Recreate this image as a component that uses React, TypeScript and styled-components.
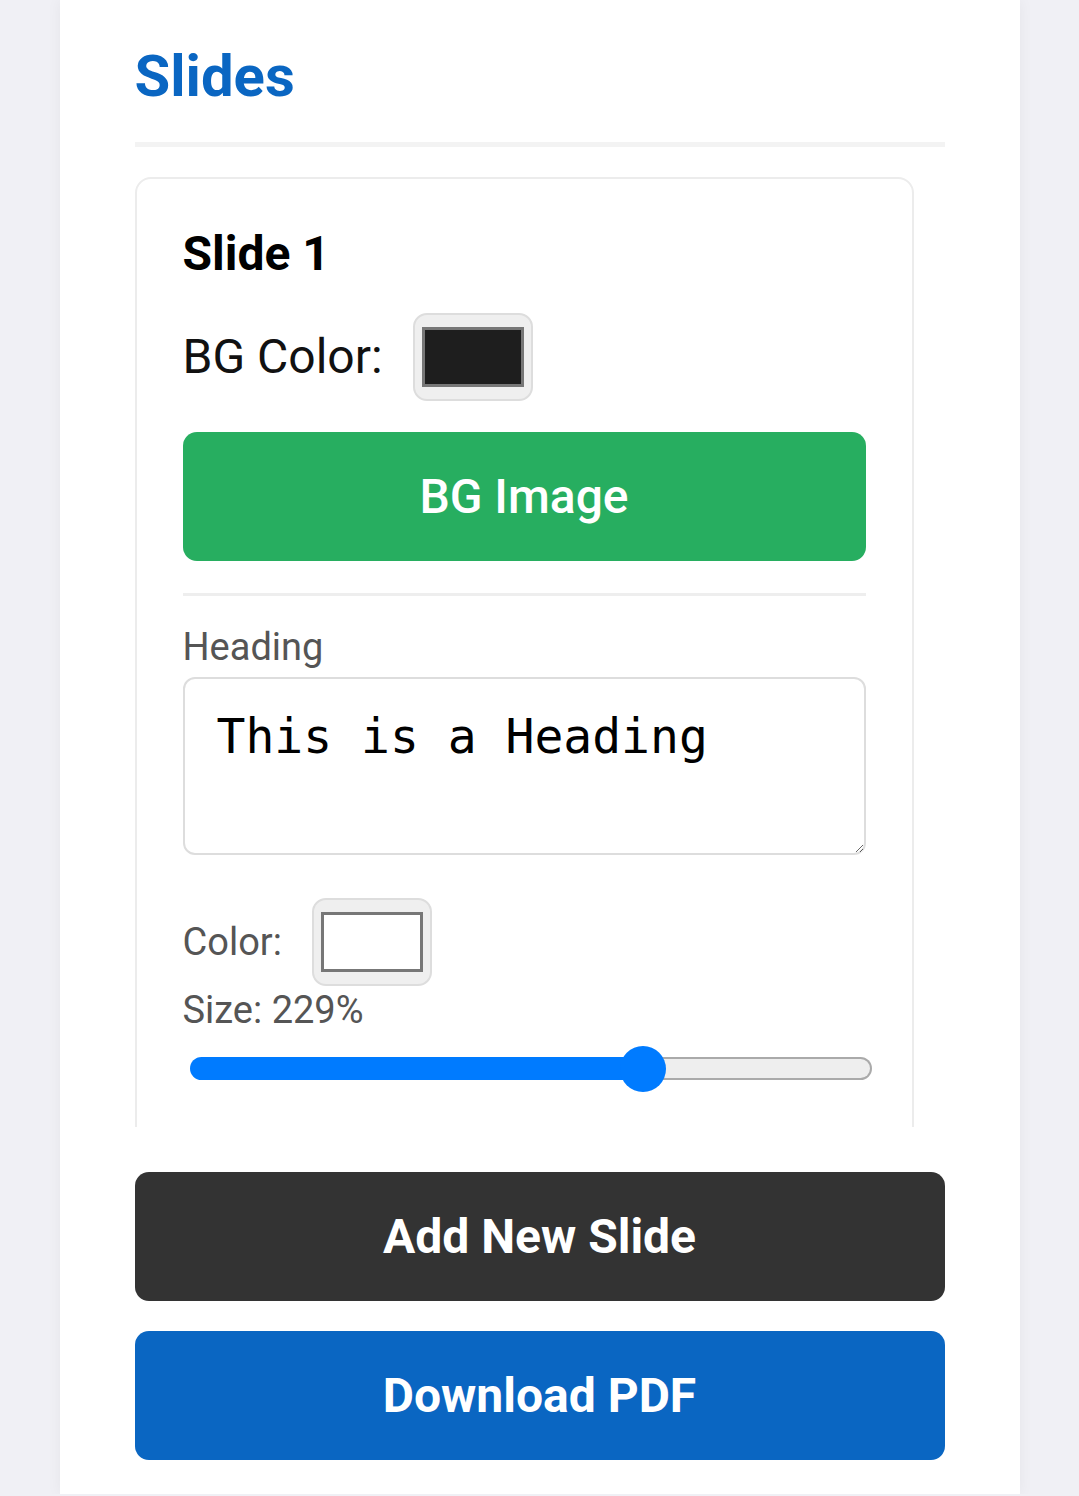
import { useState } from "react";
import styled, { createGlobalStyle } from "styled-components";

const GlobalStyle = createGlobalStyle`
  * {
    box-sizing: border-box;
  }
  body {
    margin: 0;
    background: #f0f0f5;
    font-family: Roboto, "Noto Sans", Arial, sans-serif;
  }
`;

const Panel = styled.main`
  width: 960px;
  margin: 0 auto;
  padding: 0 75px 34px;
  background: #ffffff;
  box-shadow: 0 0 14px rgba(0, 0, 0, 0.05);
`;

const Header = styled.header`
  padding: 47px 0 37px;
  border-bottom: 5px solid #f3f3f3;
  margin-bottom: 30px;
`;

const Title = styled.h2`
  margin: 0;
  font-size: 58px;
  line-height: 1;
  font-weight: 700;
  color: #0a66c2;
`;

const SlideList = styled.div`
  height: 950px;
  overflow: hidden;
  padding-right: 31px;
`;

const SlideCard = styled.section`
  border: 2px solid #ececec;
  border-radius: 16px;
  padding: 51px 46px 120px;
`;

const SlideTitle = styled.h3`
  margin: 0 0 35px;
  font-size: 48px;
  line-height: 1;
  font-weight: 700;
  color: #000;
`;

const ColorRow = styled.div<{ $top?: number }>`
  display: flex;
  align-items: center;
  gap: 30px;
  margin-top: ${(p) => p.$top ?? 0}px;
`;

const BgLabel = styled.label`
  font-size: 48px;
  line-height: 1;
  color: #111;
`;

const FieldLabel = styled.label<{ $top?: number }>`
  display: block;
  margin-top: ${(p) => p.$top ?? 0}px;
  font-size: 38px;
  line-height: 1;
  color: #555;
`;

const ColorInput = styled.input.attrs({ type: "color" })`
  width: 120px;
  height: 88px;
  padding: 12px 7px;
  margin: 0;
  background: #efefef;
  border: 2px solid #dddddd;
  border-radius: 14px;
  cursor: pointer;

  &::-webkit-color-swatch-wrapper {
    padding: 0;
  }
  &::-webkit-color-swatch {
    border: 3px solid #777777;
    border-radius: 0;
  }
`;

const ImageButton = styled.button`
  display: block;
  width: 100%;
  height: 129px;
  margin-top: 31px;
  border: none;
  border-radius: 14px;
  background: #27ae60;
  color: #fff;
  font-family: inherit;
  font-size: 48px;
  font-weight: 500;
  cursor: pointer;
`;

const Divider = styled.hr`
  margin: 32px 0 0;
  border: none;
  height: 3px;
  background: #eeeeee;
`;

const HeadingInput = styled.textarea`
  display: block;
  width: 100%;
  height: 178px;
  margin-top: 11px;
  padding: 29px 32px;
  border: 2px solid #dddddd;
  border-radius: 12px;
  font-family: "DejaVu Sans Mono", "Liberation Mono", monospace;
  font-size: 48px;
  color: #000;
  resize: vertical;
  outline: none;
`;

const Range = styled.input.attrs({ type: "range" })`
  -webkit-appearance: none;
  appearance: none;
  display: block;
  width: calc(100% - 1px);
  height: 23px;
  margin: 28px 0 0 7px;
  border: 2px solid transparent;
  border-radius: 12px;
  background:
    linear-gradient(to right, #007bff 0 var(--fill), transparent var(--fill)) border-box,
    linear-gradient(#eeeeee, #eeeeee) padding-box,
    linear-gradient(#aaaaaa, #aaaaaa) border-box;
  outline: none;

  &::-webkit-slider-thumb {
    -webkit-appearance: none;
    width: 46px;
    height: 46px;
    border: none;
    border-radius: 50%;
    background: #007bff;
    cursor: pointer;
  }
`;

const ActionButton = styled.button<{ $primary?: boolean; $top: number }>`
  display: block;
  width: 100%;
  height: 129px;
  margin-top: ${(p) => p.$top}px;
  border: none;
  border-radius: 14px;
  background: ${(p) => (p.$primary ? "#0a66c2" : "#333333")};
  color: #fff;
  font-family: inherit;
  font-size: 48px;
  font-weight: 700;
  cursor: pointer;
`;

const MIN_SIZE = 0;
const MAX_SIZE = 338;

export default function App() {
  const [bg, setBg] = useState("#1e1e1e");
  const [heading, setHeading] = useState("This is a Heading");
  const [color, setColor] = useState("#ffffff");
  const [size, setSize] = useState(229);

  const ratio = (size - MIN_SIZE) / (MAX_SIZE - MIN_SIZE);
  const fill = `calc(25px + ${ratio} * (100% - 50px))`;

  return (
    <>
      <GlobalStyle />
      <Panel>
        <Header>
          <Title>Slides</Title>
        </Header>

        <SlideList>
          <SlideCard>
            <SlideTitle>Slide 1</SlideTitle>

            <ColorRow>
              <BgLabel htmlFor="bg1">BG Color:</BgLabel>
              <ColorInput id="bg1" value={bg} onChange={(e) => setBg(e.target.value)} />
            </ColorRow>

            <ImageButton type="button">BG Image</ImageButton>

            <Divider />

            <FieldLabel $top={32} htmlFor="heading1">
              Heading
            </FieldLabel>
            <HeadingInput
              id="heading1"
              value={heading}
              onChange={(e) => setHeading(e.target.value)}
            />

            <ColorRow $top={43}>
              <FieldLabel htmlFor="color1">Color:</FieldLabel>
              <ColorInput id="color1" value={color} onChange={(e) => setColor(e.target.value)} />
            </ColorRow>

            <FieldLabel $top={5} htmlFor="size1">
              Size: {size}%
            </FieldLabel>
            <Range
              id="size1"
              min={MIN_SIZE}
              max={MAX_SIZE}
              value={size}
              onChange={(e) => setSize(Number(e.target.value))}
              style={{ ["--fill" as string]: fill }}
            />
          </SlideCard>
        </SlideList>

        <ActionButton type="button" $top={45}>
          Add New Slide
        </ActionButton>
        <ActionButton type="button" $primary $top={30}>
          Download PDF
        </ActionButton>
      </Panel>
    </>
  );
}
